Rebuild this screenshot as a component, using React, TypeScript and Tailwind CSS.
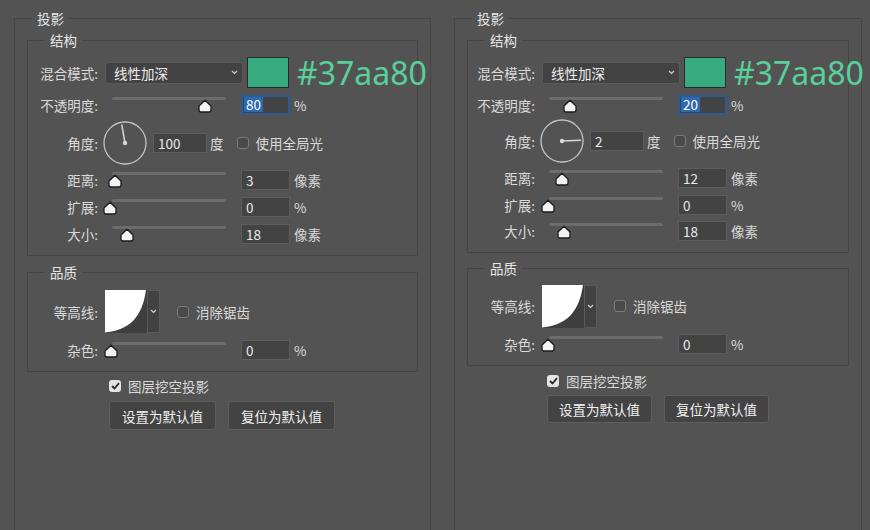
import React from "react";

type Cfg = {
  width: string;
  offset: string;
  labelW: string;
  rows: string[];
  structPb: string;
  qualMt: string;
  qualPt: string;
  contourH: string;
  cbMt: string;
  btnMt: string;
  btn: string;
  bottomMl: string;
  opacity: string;
  angle: number;
  distance: string;
  size: string;
  thumbs: { opacity: number; distance: number; spread: number; size: number; noise: number };
};

const panels: Cfg[] = [
  {
    width: "w-[417px]",
    offset: "ml-[14px]",
    labelW: "w-[70px]",
    rows: ["h-[31px]", "h-[33px]", "h-[44px]", "h-[30px]", "h-[24px]", "h-[30px]"],
    structPb: "pb-[6px]",
    qualMt: "mt-[8px]",
    qualPt: "pt-[10px]",
    contourH: "h-[43px]",
    cbMt: "mt-[6px]",
    btnMt: "mt-[7px]",
    btn: "h-[29px] w-[107px]",
    bottomMl: "ml-[82px]",
    opacity: "80",
    angle: 100,
    distance: "3",
    size: "18",
    thumbs: { opacity: 102, distance: 11.5, spread: 7, size: 23.5, noise: 7.5 },
  },
  {
    width: "w-[408px]",
    offset: "ml-[23px]",
    labelW: "w-[67px]",
    rows: ["h-[31px]", "h-[33px]", "h-[40px]", "h-[34px]", "h-[19px]", "h-[34px]"],
    structPb: "pb-[4px]",
    qualMt: "mt-[7px]",
    qualPt: "pt-[9px]",
    contourH: "h-[42px]",
    cbMt: "mt-[7px]",
    btnMt: "mt-[6px]",
    btn: "h-[28px] w-[105px]",
    bottomMl: "ml-[80px]",
    opacity: "20",
    angle: 2,
    distance: "12",
    size: "18",
    thumbs: { opacity: 30, distance: 22, spread: 8, size: 24, noise: 8 },
  },
];

function Chevron() {
  return (
    <svg width="7" height="5" viewBox="0 0 7 5">
      <path d="M1 1 L3.5 3.5 L6 1" fill="none" stroke="#cfcfcf" strokeWidth="1.2" />
    </svg>
  );
}

function Slider({ pos }: { pos: number }) {
  return (
    <div className="relative ml-[5px] h-[16px] w-[130px] shrink-0">
      <div className="ml-[9px] h-[3px] w-[114px] rounded-full bg-[#6c6c6c]" />
      <svg className="absolute top-[2px]" style={{ left: pos - 8 }} width="16" height="14" viewBox="0 0 16 14">
        <path
          d="M8 1.2 L14 7 V11 Q14 13 12 13 H4 Q2 13 2 11 V7 Z"
          fill="#f2f2f2"
          stroke="#1c1c1c"
          strokeWidth="1.3"
          strokeLinejoin="round"
        />
      </svg>
    </div>
  );
}

function Field({ v, focus }: { v: string; focus?: boolean }) {
  if (focus) {
    return (
      <div className="flex h-[20px] w-[49px] shrink-0 items-center border-2 border-[#2c5b94] bg-[#434343] pl-[1px]">
        <span className="bg-[#2e68b0] px-[2px] leading-[15px] text-white">{v}</span>
      </div>
    );
  }
  return (
    <div className="flex h-[20px] w-[49px] shrink-0 items-center border border-[#5c5c5c] bg-[#434343] pl-[4px] text-[#e8e8e8]">
      {v}
    </div>
  );
}

function Check({ on }: { on?: boolean }) {
  if (on) {
    return (
      <div className="flex h-[12px] w-[12px] shrink-0 items-center justify-center rounded-[3px] bg-[#e4e4e4]">
        <svg width="9" height="8" viewBox="0 0 9 8">
          <path d="M1 4 L3.5 6.5 L8 1.2" fill="none" stroke="#2a2a2a" strokeWidth="1.8" />
        </svg>
      </div>
    );
  }
  return <div className="h-[12px] w-[12px] shrink-0 rounded-[3px] border border-[#7a7a7a] bg-[#4a4a4a]" />;
}

function Dial({ deg }: { deg: number }) {
  const rad = (deg * Math.PI) / 180;
  const x2 = 22 + 19 * Math.cos(rad);
  const y2 = 22 - 19 * Math.sin(rad);
  return (
    <svg className="ml-[5px] shrink-0" width="44" height="44" viewBox="0 0 44 44">
      <circle cx="22" cy="22" r="21" fill="none" stroke="#c4c4c4" strokeWidth="1.3" />
      <line x1="22" y1="22" x2={x2} y2={y2} stroke="#d6d6d6" strokeWidth="1.5" />
      <circle cx="22" cy="22" r="2.2" fill="#d6d6d6" />
    </svg>
  );
}

function SliderRow({ h, labelW, label, pos, v, unit, focus }: { h: string; labelW: string; label: string; pos: number; v: string; unit: string; focus?: boolean }) {
  return (
    <div className={`flex items-center ${h}`}>
      <div className={`${labelW} shrink-0 text-right`}>{label}</div>
      <Slider pos={pos} />
      <div className="ml-[8px]">
        <Field v={v} focus={focus} />
      </div>
      <span className="ml-[4px]">{unit}</span>
    </div>
  );
}

function Panel({ c }: { c: Cfg }) {
  return (
    <fieldset className={`${c.offset} ${c.width} mt-[10px] h-[540px] min-w-0 shrink-0 border border-[#454545] px-[12px]`}>
      <legend className="ml-[5px] px-[5px] leading-[16px] text-[#e6e6e6]">投影</legend>

      <fieldset className={`mt-[6px] min-w-0 border border-[#454545] pt-[9px] ${c.structPb}`}>
        <legend className="ml-[17px] px-[5px] leading-[16px] text-[#e6e6e6]">结构</legend>

        <div className={`flex items-center ${c.rows[0]}`}>
          <div className={`${c.labelW} shrink-0 text-right`}>混合模式:</div>
          <div className="ml-[7px] flex h-[22px] w-[138px] shrink-0 items-center justify-between rounded-[3px] border border-[#5a5a5a] bg-[#424242] pl-[8px] pr-[4px]">
            <span className="text-[#ececec]">线性加深</span>
            <Chevron />
          </div>
          <div className="ml-[4px] h-[31px] w-[42px] shrink-0 border border-[#2a2a2a] bg-[#37aa80]" />
          <span className="ml-[8px] whitespace-nowrap font-['Noto_Sans',sans-serif] text-[32px] leading-none text-[#58d09b]">
            #37aa80
          </span>
        </div>

        <SliderRow h={c.rows[1]} labelW={c.labelW} label="不透明度:" pos={c.thumbs.opacity} v={c.opacity} unit="%" focus />

        <div className={`flex items-center ${c.rows[2]}`}>
          <div className={`${c.labelW} shrink-0 text-right`}>角度:</div>
          <Dial deg={c.angle} />
          <div className="ml-[6px] flex h-[20px] w-[54px] shrink-0 items-center border border-[#5c5c5c] bg-[#434343] pl-[4px] text-[#e8e8e8]">
            {String(c.angle)}
          </div>
          <span className="ml-[3px]">度</span>
          <div className="ml-[13px]">
            <Check />
          </div>
          <span className="ml-[7px]">使用全局光</span>
        </div>

        <SliderRow h={c.rows[3]} labelW={c.labelW} label="距离:" pos={c.thumbs.distance} v={c.distance} unit="像素" />
        <SliderRow h={c.rows[4]} labelW={c.labelW} label="扩展:" pos={c.thumbs.spread} v="0" unit="%" />
        <SliderRow h={c.rows[5]} labelW={c.labelW} label="大小:" pos={c.thumbs.size} v={c.size} unit="像素" />
      </fieldset>

      <fieldset className={`${c.qualMt} ${c.qualPt} min-w-0 border border-[#454545] pb-[5px]`}>
        <legend className="ml-[17px] px-[5px] leading-[16px] text-[#e6e6e6]">品质</legend>

        <div className={`flex items-center ${c.contourH}`}>
          <div className={`${c.labelW} shrink-0 text-right`}>等高线:</div>
          <div className="ml-[7px] flex h-[43px] shrink-0">
            <svg width="42" height="43" viewBox="0 0 42 43">
              <rect width="42" height="43" fill="#3e3e3e" />
              <path d="M0 0 H41 C38 20 30 40 0 42.5 Z" fill="#ffffff" />
            </svg>
            <div className="flex w-[13px] items-center justify-center border border-[#5a5a5a] bg-[#414141]">
              <Chevron />
            </div>
          </div>
          <div className="ml-[17px]">
            <Check />
          </div>
          <span className="ml-[7px]">消除锯齿</span>
        </div>

        <SliderRow h="h-[33px]" labelW={c.labelW} label="杂色:" pos={c.thumbs.noise} v="0" unit="%" />
      </fieldset>

      <div className={`${c.bottomMl} ${c.cbMt} flex h-[16px] items-center`}>
        <Check on />
        <span className="ml-[7px]">图层挖空投影</span>
      </div>
      <div className={`${c.bottomMl} ${c.btnMt} flex gap-[12px]`}>
        <div className={`${c.btn} flex items-center justify-center rounded-[3px] border border-[#5e5e5e] bg-[#434343] text-[#f0f0f0]`}>
          设置为默认值
        </div>
        <div className={`${c.btn} flex items-center justify-center rounded-[3px] border border-[#5e5e5e] bg-[#434343] text-[#f0f0f0]`}>
          复位为默认值
        </div>
      </div>
    </fieldset>
  );
}

export default function App() {
  return (
    <div className="flex h-[530px] w-[870px] items-start overflow-hidden bg-[#535353] font-['Noto_Sans_CJK_SC','Noto_Sans',sans-serif] text-[13.5px] leading-[16px] text-[#dadada]">
      {panels.map((p, i) => (
        <Panel key={i} c={p} />
      ))}
    </div>
  );
}
